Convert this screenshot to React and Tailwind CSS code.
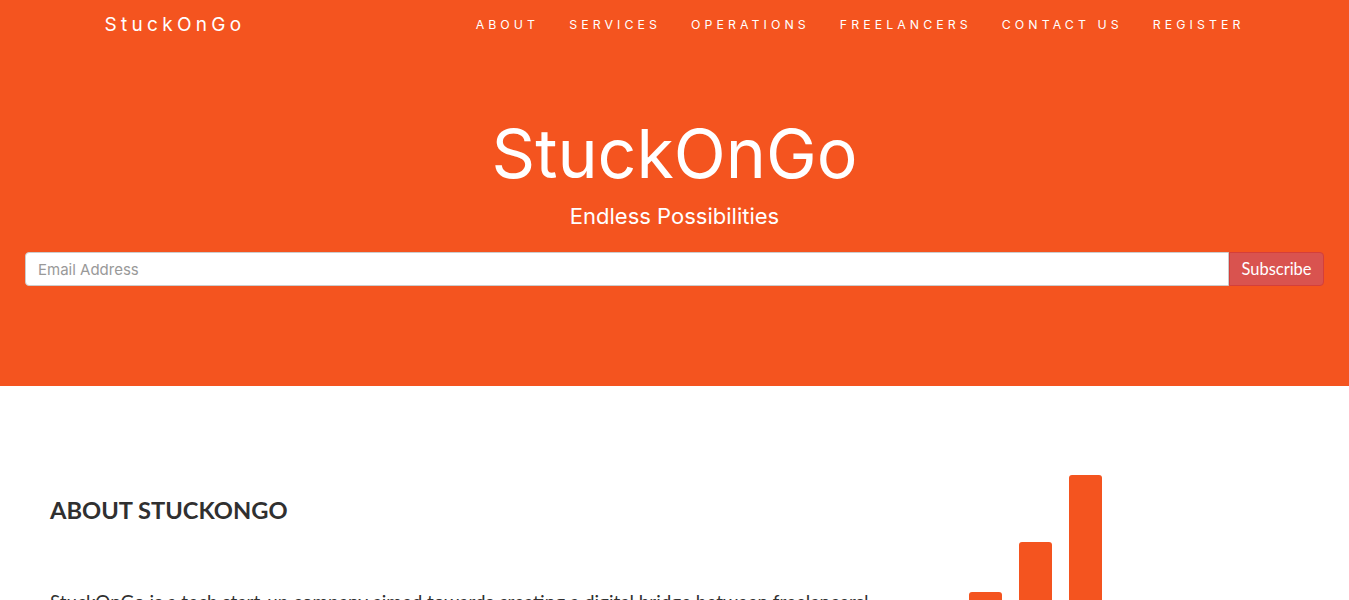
export default function App() {
  const links = ["ABOUT", "SERVICES", "OPERATIONS", "FREELANCERS", "CONTACT US", "REGISTER"];
  return (
    <div className="min-h-screen bg-white font-['Lato',sans-serif] text-[#303030]">
      {/* Navbar */}
      <nav className="bg-[#f4541f] h-[50px]">
        <div className="mx-auto w-[1170px] px-[15px] h-full flex items-center justify-between font-['Inter',sans-serif] text-white">
          <a className="text-[19px] tracking-[4.3px] leading-[50px]">StuckOnGo</a>
          <ul className="flex items-center -mr-[15px]">
            {links.map((l) => (
              <li key={l} className="px-[15px] text-[12.3px] tracking-[4.1px] leading-[50px]">
                {l}
              </li>
            ))}
          </ul>
        </div>
      </nav>

      {/* Hero */}
      <header className="bg-[#f4541f] h-[336px] px-[25px] pt-[68px] text-center text-white font-['Inter',sans-serif]">
        <h1 className="text-[68px] leading-[70px] font-normal">StuckOnGo</h1>
        <p className="mt-[14px] text-[22px] leading-[28px]">Endless Possibilities</p>
        <form className="mt-[22px] flex h-[34px]">
          <input
            type="email"
            placeholder="Email Address"
            className="flex-1 h-full rounded-l-[4px] border border-[#cccccc] bg-white px-[12px] text-[15px] text-[#555] placeholder:text-[#999] outline-none"
          />
          <button
            type="button"
            className="w-[95px] h-full rounded-r-[4px] border border-[#d43f3a] bg-[#d9534f] text-[16.5px] text-white font-['Lato',sans-serif]"
          >
            Subscribe
          </button>
        </form>
      </header>

      {/* About */}
      <section className="px-[50px] pt-[60px]">
        <div className="flex">
          <div className="w-[870px] shrink-0">
            <h2 className="mt-[50px] text-[23.7px] font-bold leading-[28px] text-[#303030]">ABOUT STUCKONGO</h2>
            <h4 className="mt-[65px] text-[18.85px] leading-[26px] text-[#303030]">
              StuckOnGo is a tech start-up company aimed towards creating a digital bridge between freelancers!
            </h4>
          </div>
          <div className="flex-1 pt-[29px]">
            <svg width="240" height="200" viewBox="0 0 240 200" className="ml-[49px]" fill="#f4541f">
              <rect x="0" y="117" width="33" height="200" rx="3" />
              <rect x="50" y="67" width="33" height="200" rx="3" />
              <rect x="100" y="0" width="33" height="200" rx="3" />
            </svg>
          </div>
        </div>
      </section>
    </div>
  );
}
